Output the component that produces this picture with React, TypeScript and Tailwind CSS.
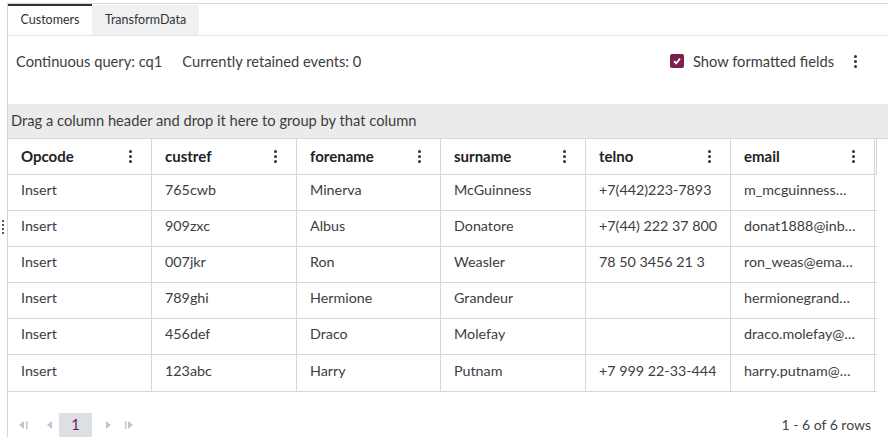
import React from "react";

const COLUMNS = ["Opcode", "custref", "forename", "surname", "telno", "email"];

const ROWS = [
  ["Insert", "765cwb", "Minerva", "McGuinness", "+7(442)223-7893", "m_mcguinness@gmail.com"],
  ["Insert", "909zxc", "Albus", "Donatore", "+7(44) 222 37 800", "donat1888@inbox.ru"],
  ["Insert", "007jkr", "Ron", "Weasler", "78 50 3456 21 3", "ron_weas@email.com"],
  ["Insert", "789ghi", "Hermione", "Grandeur", "", "hermionegrandeur@mail.com"],
  ["Insert", "456def", "Draco", "Molefay", "", "draco.molefay@mail.com"],
  ["Insert", "123abc", "Harry", "Putnam", "+7 999 22-33-444", "harry.putnam@mail.com"],
];

function Kebab() {
  return (
    <div className="flex flex-col items-center gap-[2px]">
      <span className="w-[3px] h-[3px] rounded-full bg-[#333]" />
      <span className="w-[3px] h-[3px] rounded-full bg-[#333]" />
      <span className="w-[3px] h-[3px] rounded-full bg-[#333]" />
    </div>
  );
}

function PagerIcon({ dir, bar }: { dir: "left" | "right"; bar?: boolean }) {
  return (
    <svg width="10" height="8" viewBox="0 0 10 8" className="text-[#c3c5cc]">
      {dir === "left" ? (
        <>
          <path d="M5 0 L0 4 L5 8 Z" fill="currentColor" />
          {bar && <rect x="7" y="0" width="1.5" height="8" fill="currentColor" />}
        </>
      ) : (
        <>
          {bar && <rect x="1" y="0" width="1.5" height="8" fill="currentColor" />}
          <path d="M4 0 L9 4 L4 8 Z" fill="currentColor" />
        </>
      )}
    </svg>
  );
}

export default function App() {
  return (
    <div className="w-[888px] h-[437px] bg-white overflow-hidden relative font-['Lato',sans-serif] text-[14.7px] text-[#3d3d3d]">
      {/* row drag handle */}
      <div className="absolute left-[2px] top-[220px] flex flex-col gap-[2px]">
        <span className="w-[2px] h-[2px] bg-[#555]" />
        <span className="w-[2px] h-[2px] bg-[#555]" />
        <span className="w-[2px] h-[2px] bg-[#555]" />
        <span className="w-[2px] h-[2px] bg-[#555]" />
      </div>

      <div className="ml-[7px] mt-[3px] h-[434px] border-l border-t border-[#d6d7da] flex flex-col">
        {/* Tabs */}
        <div className="h-[32px] flex border-b border-[#e3e4e7] shrink-0">
          <div className="w-[84px] border-t-2 border-[#333] bg-white flex items-center justify-center text-[12.5px] text-[#333]">
            Customers
          </div>
          <div className="w-[107px] bg-[#f0f1f3] mt-[1px] flex items-center justify-center text-[12.5px] text-[#333]">
            TransformData
          </div>
        </div>

        {/* Info bar */}
        <div className="h-[68px] flex items-start pt-[14px] px-[8px] shrink-0">
          <span className="mr-[20px]">Continuous query: cq1</span>
          <span>Currently retained events: 0</span>
          <div className="ml-auto flex items-center mr-[23px]">
            <div className="w-[14px] h-[14px] rounded-[2px] bg-[#7b1f4f] flex items-center justify-center mr-[9px]">
              <svg width="10" height="10" viewBox="0 0 10 10">
                <path d="M2 5.2 L4.2 7.4 L8 2.6" stroke="white" strokeWidth="1.8" fill="none" />
              </svg>
            </div>
            <span className="mr-[20px]">Show formatted fields</span>
            <Kebab />
          </div>
        </div>

        {/* Group panel */}
        <div className="h-[35px] bg-[#ebebec] border-b border-[#d6d7da] flex items-center pl-[3px] pb-[1px] text-[#3d3d3d] shrink-0">
          Drag a column header and drop it here to group by that column
        </div>

        {/* Table */}
        <div className="w-[869px] border-b border-[#d6d7da]">
          <div className="grid grid-cols-[144px_145px_144px_145px_145px_144px_2px] h-[36px] border-b border-[#d6d7da]">
            {COLUMNS.map((c) => (
              <div key={c} className="border-r border-[#d6d7da] flex items-center pl-[13px] pr-[19px]">
                <span className="font-bold text-[15px] text-[#222]">{c}</span>
                <div className="ml-auto">
                  <Kebab />
                </div>
              </div>
            ))}
            <div className="border-r border-[#d6d7da]" />
          </div>
          {ROWS.map((r, i) => (
            <div key={i} className={`grid grid-cols-[144px_145px_144px_145px_145px_144px] h-[36px] ${i < ROWS.length - 1 ? "border-b border-[#d6d7da]" : ""}`}>
              {r.map((v, j) => (
                <div
                  key={j}
                  className={`border-r border-[#d6d7da] flex items-center pl-[13px] pb-[5px] overflow-hidden text-[14.3px] ${j === 5 ? "pr-[18px]" : "pr-[4px]"}`}
                >
                  <span className="truncate">{v}</span>
                </div>
              ))}
            </div>
          ))}
        </div>

        {/* Pager */}
        <div className="flex items-center mt-[20px] pl-[11px] pr-[17px] h-[25px]">
          <PagerIcon dir="left" bar />
          <span className="w-[18px]" />
          <PagerIcon dir="left" />
          <div className="ml-[2px] w-[33px] h-[24px] bg-[#dcdfe3] flex items-center justify-center text-[#6b1a55]">1</div>
          <span className="w-[10px]" />
          <PagerIcon dir="right" />
          <span className="w-[12px]" />
          <PagerIcon dir="right" bar />
          <span className="ml-auto text-[14px] text-[#444]">1 - 6 of 6 rows</span>
        </div>
      </div>
    </div>
  );
}
